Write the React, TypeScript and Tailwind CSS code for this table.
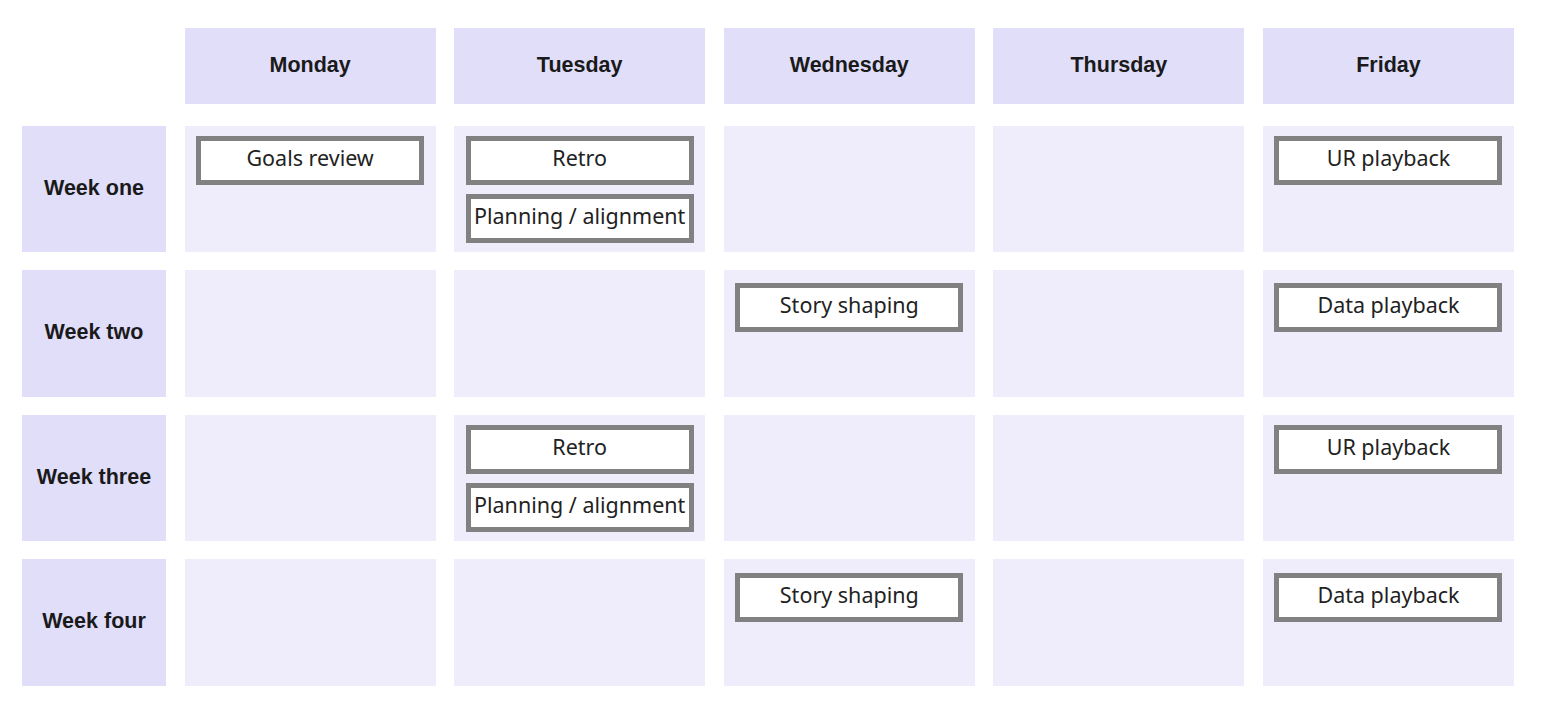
import React from 'react'

type Ev = { label: string }
type Row = { name: string; top: string; cells: Ev[][] }

const days = ['Monday', 'Tuesday', 'Wednesday', 'Thursday', 'Friday']

const rows: Row[] = [
    {
        name: 'Week one',
        top: 'pt-[10px]',
        cells: [[{ label: 'Goals review' }], [{ label: 'Retro' }, { label: 'Planning / alignment' }], [], [], [{ label: 'UR playback' }]],
    },
    {
        name: 'Week two',
        top: 'pt-[13px]',
        cells: [[], [], [{ label: 'Story shaping' }], [], [{ label: 'Data playback' }]],
    },
    {
        name: 'Week three',
        top: 'pt-[10px]',
        cells: [[], [{ label: 'Retro' }, { label: 'Planning / alignment' }], [], [], [{ label: 'UR playback' }]],
    },
    {
        name: 'Week four',
        top: 'pt-[14px]',
        cells: [[], [], [{ label: 'Story shaping' }], [], [{ label: 'Data playback' }]],
    },
]

const EventBox = ({ label }: Ev) => (
    <div className="h-[49px] w-[228px] border-[5px] border-[#818181] bg-white flex items-center justify-center text-[21.5px] leading-none text-[#222] font-['Noto_Sans',sans-serif] whitespace-nowrap pb-[5px]">
        {label}
    </div>
)

export default function App() {
    return (
        <div className="min-h-screen bg-white pl-[22px] pt-[27.5px] font-['Liberation_Sans',Arial,sans-serif]">
            {/* header row */}
            <div className="grid grid-cols-[144px_repeat(5,251px)] gap-x-[18.6px] h-[76px]">
                <div />
                {days.map((d) => (
                    <div key={d} className="bg-[#e1defa] flex items-center justify-center pb-[1px] text-[21.5px] font-bold text-[#1a1a1a]">
                        {d}
                    </div>
                ))}
            </div>

            {/* week rows */}
            <div className="mt-[22px] grid grid-cols-[144px_repeat(5,251px)] gap-x-[18.6px] auto-rows-[126.5px] gap-y-[18px]">
                {rows.map((r) => (
                    <React.Fragment key={r.name}>
                        <div className="bg-[#e1defa] flex items-center justify-center pb-[2px] text-[21.5px] font-bold text-[#1a1a1a]">
                            {r.name}
                        </div>
                        {r.cells.map((evs, i) => (
                            <div key={i} className={`bg-[#efedfb] flex flex-col gap-[9.5px] pl-[11.5px] ${r.top}`}>
                                {evs.map((e, j) => (
                                    <EventBox key={j} label={e.label} />
                                ))}
                            </div>
                        ))}
                    </React.Fragment>
                ))}
            </div>
        </div>
    )
}
